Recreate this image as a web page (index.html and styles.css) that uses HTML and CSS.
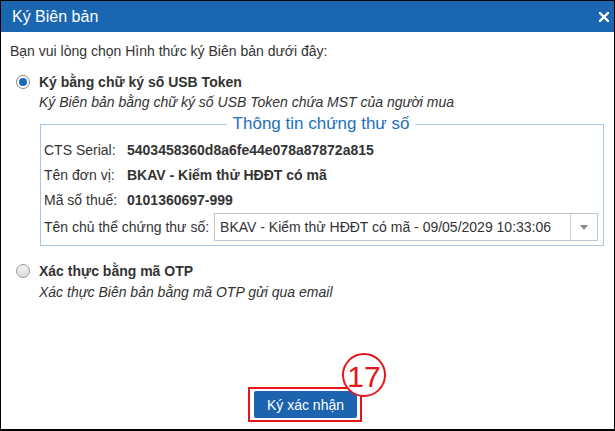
FILE: index.html
```html
<!DOCTYPE html>
<html lang="vi">
<head>
<meta charset="utf-8">
<title>Ký Biên bản</title>
<link rel="stylesheet" href="styles.css">
</head>
<body>
<div class="dialog">
  <div class="header">
    <span class="title">Ký Biên bản</span>
    <svg class="close" width="10" height="10" viewBox="0 0 10 10"><path d="M1 1 L9 9 M9 1 L1 9" stroke="#fff" stroke-width="2.4" stroke-linecap="square"/></svg>
  </div>
  <div class="content">
    <p class="intro">Bạn vui lòng chọn Hình thức ký Biên bản dưới đây:</p>

    <div class="option">
      <span class="radio checked"></span>
      <div class="option-text">
        <div class="opt-title">Ký bằng chữ ký số USB Token</div>
        <div class="opt-desc">Ký Biên bản bằng chữ ký số USB Token chứa MST của người mua</div>
      </div>
    </div>

    <fieldset class="cert">
      <legend>Thông tin chứng thư số</legend>
      <div class="row first"><span class="lbl">CTS Serial:</span><span class="val">5403458360d8a6fe44e078a87872a815</span></div>
      <div class="row"><span class="lbl">Tên đơn vị:</span><span class="val">BKAV - Kiểm thử HĐĐT có mã</span></div>
      <div class="row"><span class="lbl">Mã số thuế:</span><span class="val">0101360697-999</span></div>
      <div class="row last"><span class="lbl2">Tên chủ thể chứng thư số:</span>
        <div class="select">
          <span class="sel-text">BKAV - Kiểm thử HĐĐT có mã - 09/05/2029 10:33:06</span>
          <span class="sel-arrow"><svg width="8" height="5" viewBox="0 0 8 5"><path d="M0 0 L8 0 L4 5 Z" fill="#8a8a8a"/></svg></span>
        </div>
      </div>
    </fieldset>

    <div class="option second">
      <span class="radio"></span>
      <div class="option-text">
        <div class="opt-title">Xác thực bằng mã OTP</div>
        <div class="opt-desc">Xác thực Biên bản bằng mã OTP gửi qua email</div>
      </div>
    </div>
  </div>
  <div class="footer">
    <div class="mark">
      <button class="btn">Ký xác nhận</button>
      <span class="badge">17</span>
    </div>
  </div>
</div>
</body>
</html>
```

FILE: styles.css
```css
* { box-sizing: border-box; }
html, body { margin: 0; padding: 0; background: #fff; }
body { font-family: "Liberation Sans", Arial, sans-serif; font-size: 14px; color: #333; }

.dialog {
  width: 615px;
  height: 431px;
  border: 1px solid #000;
  border-bottom-width: 2px;
  display: flex;
  flex-direction: column;
  background: #fff;
}

.header {
  height: 31px;
  background: #1b66b1;
  color: #fff;
  display: flex;
  align-items: center;
  justify-content: space-between;
  padding: 0 4px 0 11px;
  flex-shrink: 0;
}
.title { font-size: 16px; }
.close { display: block; margin-right: 1px; }

.content {
  flex: 1;
  padding: 11px 12px 0 9px;
}
.intro { margin: 0; line-height: 16px; }

.option {
  display: flex;
  align-items: flex-start;
  margin-top: 15px;
  padding-left: 6px;
}
.option.second { margin-top: 17px; }
.radio {
  width: 14px;
  height: 14px;
  border-radius: 50%;
  border: 1px solid #9a9a9a;
  background: linear-gradient(#f4f4f4, #dcdcdc);
  margin-top: 1px;
  margin-right: 9px;
  flex-shrink: 0;
  display: flex;
  align-items: center;
  justify-content: center;
}
.radio.checked { background: #fff; border-color: #8a8a8a; }
.radio.checked::after {
  content: "";
  width: 8px;
  height: 8px;
  border-radius: 50%;
  background: #1c69bd;
}
.opt-title { font-weight: bold; font-size: 14px; line-height: 16px; }
.opt-desc { font-style: italic; line-height: 16px; margin-top: 4px; }
.second .opt-desc { margin-top: 5px; }

.cert {
  margin: 5px 0 0 30px;
  width: 564px;
  border: 1px solid #a8c6e6;
  padding: 0 5px 4px 3px;
  min-width: 0;
}
.cert legend {
  margin: 0 auto;
  padding: 0 6px;
  color: #1e6fba;
  font-size: 17px;
  line-height: 18px;
}
.row {
  display: flex;
  align-items: center;
  height: 25px;
}
.row.first { margin-top: 4px; }
.lbl { width: 83px; flex-shrink: 0; }
.val { font-weight: bold; }
.row.last { height: 28px; margin-top: 1px; }
.lbl2 { margin-right: 5px; }
.select {
  flex: 1;
  height: 28px;
  border: 1px solid #c4c4c4;
  display: flex;
  align-items: center;
  background: #fff;
}
.sel-text { flex: 1; padding-left: 5px; }
.sel-arrow {
  width: 27px;
  height: 100%;
  border-left: 1px solid #d6d6d6;
  display: flex;
  align-items: center;
  justify-content: center;
}
.sel-arrow svg { display: block; }

.footer {
  display: flex;
  justify-content: center;
  padding: 0 0 7px 0;
  margin-left: -5px;
}
.mark {
  position: relative;
  border: 2px solid #e8141b;
  padding: 2px 3px 2px 4px;
}
.btn {
  display: block;
  width: 103px;
  height: 27px;
  background: #1c64b0;
  color: #fff;
  border: none;
  border-radius: 2px;
  font-family: "Liberation Sans", Arial, sans-serif;
  font-size: 14px;
  padding: 0;
}
.badge {
  position: absolute;
  right: -26px;
  top: -36px;
  width: 44px;
  height: 44px;
  border-radius: 50%;
  border: 2px solid #e8141b;
  background: #fff;
  color: #e8141b;
  font-size: 30px;
  line-height: 44px;
  text-align: center;
}
```
